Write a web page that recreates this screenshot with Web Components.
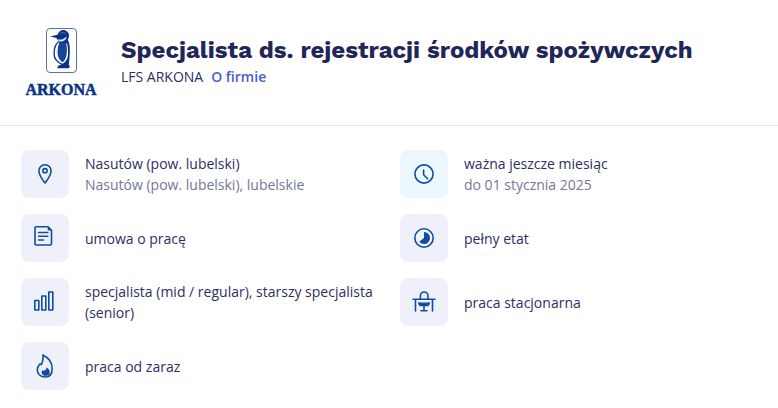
<!DOCTYPE html>
<html lang="pl">
<head>
<meta charset="utf-8">
<meta name="viewport" content="width=device-width, initial-scale=1">
<title>Specjalista ds. rejestracji środków spożywczych</title>
<style>
body { margin: 0; background: #fff; color: #2b3062; font: 14px/21px "Open Sans", "Noto Sans", sans-serif; }
</style>
</head>
<body>
<job-offer>
  <offer-header slot="header">
    <company-logo slot="logo">ARKONA</company-logo>
    <span slot="title">Specjalista ds. rejestracji środków spożywczych</span>
    <span slot="company">LFS ARKONA</span>
    <a slot="link" href="#firma">O firmie</a>
  </offer-header>
  <offer-fact icon="pin">Nasutów (pow. lubelski)<span slot="note">Nasutów (pow. lubelski), lubelskie</span></offer-fact>
  <offer-fact icon="clock" fresh>ważna jeszcze miesiąc<span slot="note">do 01 stycznia 2025</span></offer-fact>
  <offer-fact icon="contract">umowa o pracę</offer-fact>
  <offer-fact icon="time">pełny etat</offer-fact>
  <offer-fact icon="level">specjalista (mid / regular), starszy specjalista (senior)</offer-fact>
  <offer-fact icon="desk">praca stacjonarna</offer-fact>
  <offer-fact icon="fire">praca od zaraz</offer-fact>
</job-offer>

<script>
class BaseElement extends HTMLElement {
  constructor() {
    super();
    this.attachShadow({ mode: "open" });
  }
  connectedCallback() {
    this.shadowRoot.innerHTML = this.render();
  }
}

customElements.define("job-offer", class extends BaseElement {
  render() {
    return `<style>
      :host { display: block; }
      section { display: grid; grid-template-columns: repeat(2, minmax(0, 1fr)); gap: 16px 22px; padding: 24px 21px 18px; }
    </style>
    <slot name="header"></slot>
    <section><slot></slot></section>`;
  }
});

customElements.define("offer-header", class extends BaseElement {
  render() {
    return `<style>
      :host { display: block; border-bottom: 1px solid #e2e3e8; }
      header { display: flex; align-items: center; gap: 20px; padding: 21px 21px 22px; }
      .logo { flex: none; width: 80px; }
      .text { min-width: 0; padding-bottom: 4px; }
      h1 { margin: 0; color: #1f2658; font: 700 24px/32px "Work Sans", Inter, "Open Sans", sans-serif; }
      p { display: flex; gap: 8px; margin: 0; }
      ::slotted(a) { color: #4a5bd0; font-weight: 600; text-decoration: none; }
    </style>
    <header>
      <div class="logo"><slot name="logo"></slot></div>
      <div class="text">
        <h1><slot name="title"></slot></h1>
        <p><slot name="company"></slot><slot name="link"></slot></p>
      </div>
    </header>`;
  }
});

customElements.define("company-logo", class extends BaseElement {
  render() {
    return `<style>
      :host { display: flex; flex-direction: column; align-items: center; gap: 7px; padding: 6px 0 5px; color: #0b3285; font: 700 16px/16px "Liberation Serif", serif; -webkit-text-stroke: 0.5px currentColor; }
      svg { display: block; }
    </style>
    <svg width="32" height="48" viewBox="0 0 32 48" aria-hidden="true">
      <rect x="1.5" y="1.5" width="30" height="44" rx="3.500" fill="#fff" stroke="#5b6fac"/>
      <path d="M5 9.500l7.500-1.700C14 4 17 2.200 20.500 3.500c3.500 1.500 4.700 5.500 2.300 9 2.200 4.500 2.200 10 1.900 14.500-.2 4-.5 7.500-.9 11 1.500.7 1.200 3.200-.8 3.200H12.500c-.2-2 1.500-3.200 4-3.700-4.500-2-8-5-8-10.500 0-5.500.8-9.500 4.500-12.500h3.500c-2.500 0-4.500-1.200-5-3.500z" fill="#0b3285"/>
      <path d="M13 15.800c-2.500 3-3.300 7-3.200 11.200.1 4.500 3.200 8 7.700 9.700 3.800-1.700 5.300-5.200 5.500-9.700.1-3.800-.1-7.500-1-10.500z" fill="#fff"/>
      <path d="M14.500 15.500h6.500c1 4.500 1.300 9 .3 13.500-.7 3-2 5-3.800 6.200-2.700-1.700-4.700-4.700-4.900-8.700-.2-4.300.4-7.800 1.900-11z" fill="#164597"/>
      <path d="M12.500 12c3 1.300 6 .5 9-2.500-.2 3.300-2.500 5-5.700 5-1.500 0-2.700-1-3.300-2.500z" fill="#dce4f4"/>
      <path d="M15 6.500c2-1.700 4.500-1.500 6 .5" fill="none" stroke="#4169b1"/>
    </svg>
    <slot></slot>`;
  }
});

const ICONS = {
  pin: `<path d="M12 21C9 17.300 5.900 13.300 5.900 8.800a6.100 6.100 0 0 1 12.200 0c0 4.500-3.100 8.500-6.100 12.200z"/><circle cx="12" cy="8.700" r="2.100"/>`,
  clock: `<circle cx="12" cy="12" r="9.100"/><path d="M11.600 8v4.700l4 4.100"/>`,
  contract: `<path d="M3 .800h12l3.500 3.500v13.700a1 1 0 0 1-1 1H3a1 1 0 0 1-1-1V1.800a1 1 0 0 1 1-1z"/><path d="M15.500 1.800v2h2M5.600 6.500h9.200M5.600 10.300h9.200M5.600 14h5"/>`,
  time: `<circle cx="12" cy="12" r="9.200"/><path d="M12 6v6l-4.700 3.800A6 6 0 1 0 12 6z" fill="currentColor" stroke="none"/>`,
  level: `<path d="M1.800 10.500h4v9.500h-4zM8.800 6h4v14h-4zM15.800 2h4v18h-4z"/>`,
  desk: `<path d="M1 9.300h22M3.500 9.500v11.500M20.500 9.500v11.500M8.400 9V5.800a3.800 3.800 0 0 1 7.600 0V9M12 16v4.800M9 20.800h6"/><path d="M6.800 12.600v1.400l1.200 1.600h8l1.200-1.600v-1.400l-1.200.6H8z" fill="currentColor" stroke-width="1.200"/>`,
  fire: `<path d="M9.800 1c.7 3.500-.1 6.500-1.300 9.500L6.800 10C5 12 4.300 14 4.300 16c0 4 3.300 7 7.700 7 4.600 0 7.200-3.300 7.200-8.300 0-5.700-3.700-11-9.400-13.700z"/><path d="M13.600 13.500c2.200 1.300 3.200 2.800 3.200 4.800 0 2.200-1.700 3.600-4 3.600-2.400 0-4.100-1.400-4.100-3.600 0-.8.200-1.400.6-2 1.400 1 3.700.3 4.300-2.800z" fill="currentColor" stroke="none"/>`
};

customElements.define("offer-fact", class extends BaseElement {
  render() {
    return `<style>
      :host { display: flex; align-items: center; gap: 16px; min-height: 48px; }
      .tile { flex: none; display: grid; place-items: center; width: 48px; height: 48px; border-radius: 8px; background: #eef1f9; color: #0f4da0; }
      :host([fresh]) .tile { background: #ecf8fd; }
      svg { display: block; fill: none; stroke: currentColor; stroke-width: 1.6; stroke-linejoin: round; stroke-linecap: round; }
      .text { display: flex; flex-direction: column; min-width: 0; }
      ::slotted([slot="note"]) { color: #737798; }
    </style>
    <div class="tile"><svg width="24" height="24" viewBox="0 0 24 24" aria-hidden="true">${ICONS[this.getAttribute("icon")]}</svg></div>
    <div class="text"><div><slot></slot></div><slot name="note"></slot></div>`;
  }
});
</script>
</body>
</html>
